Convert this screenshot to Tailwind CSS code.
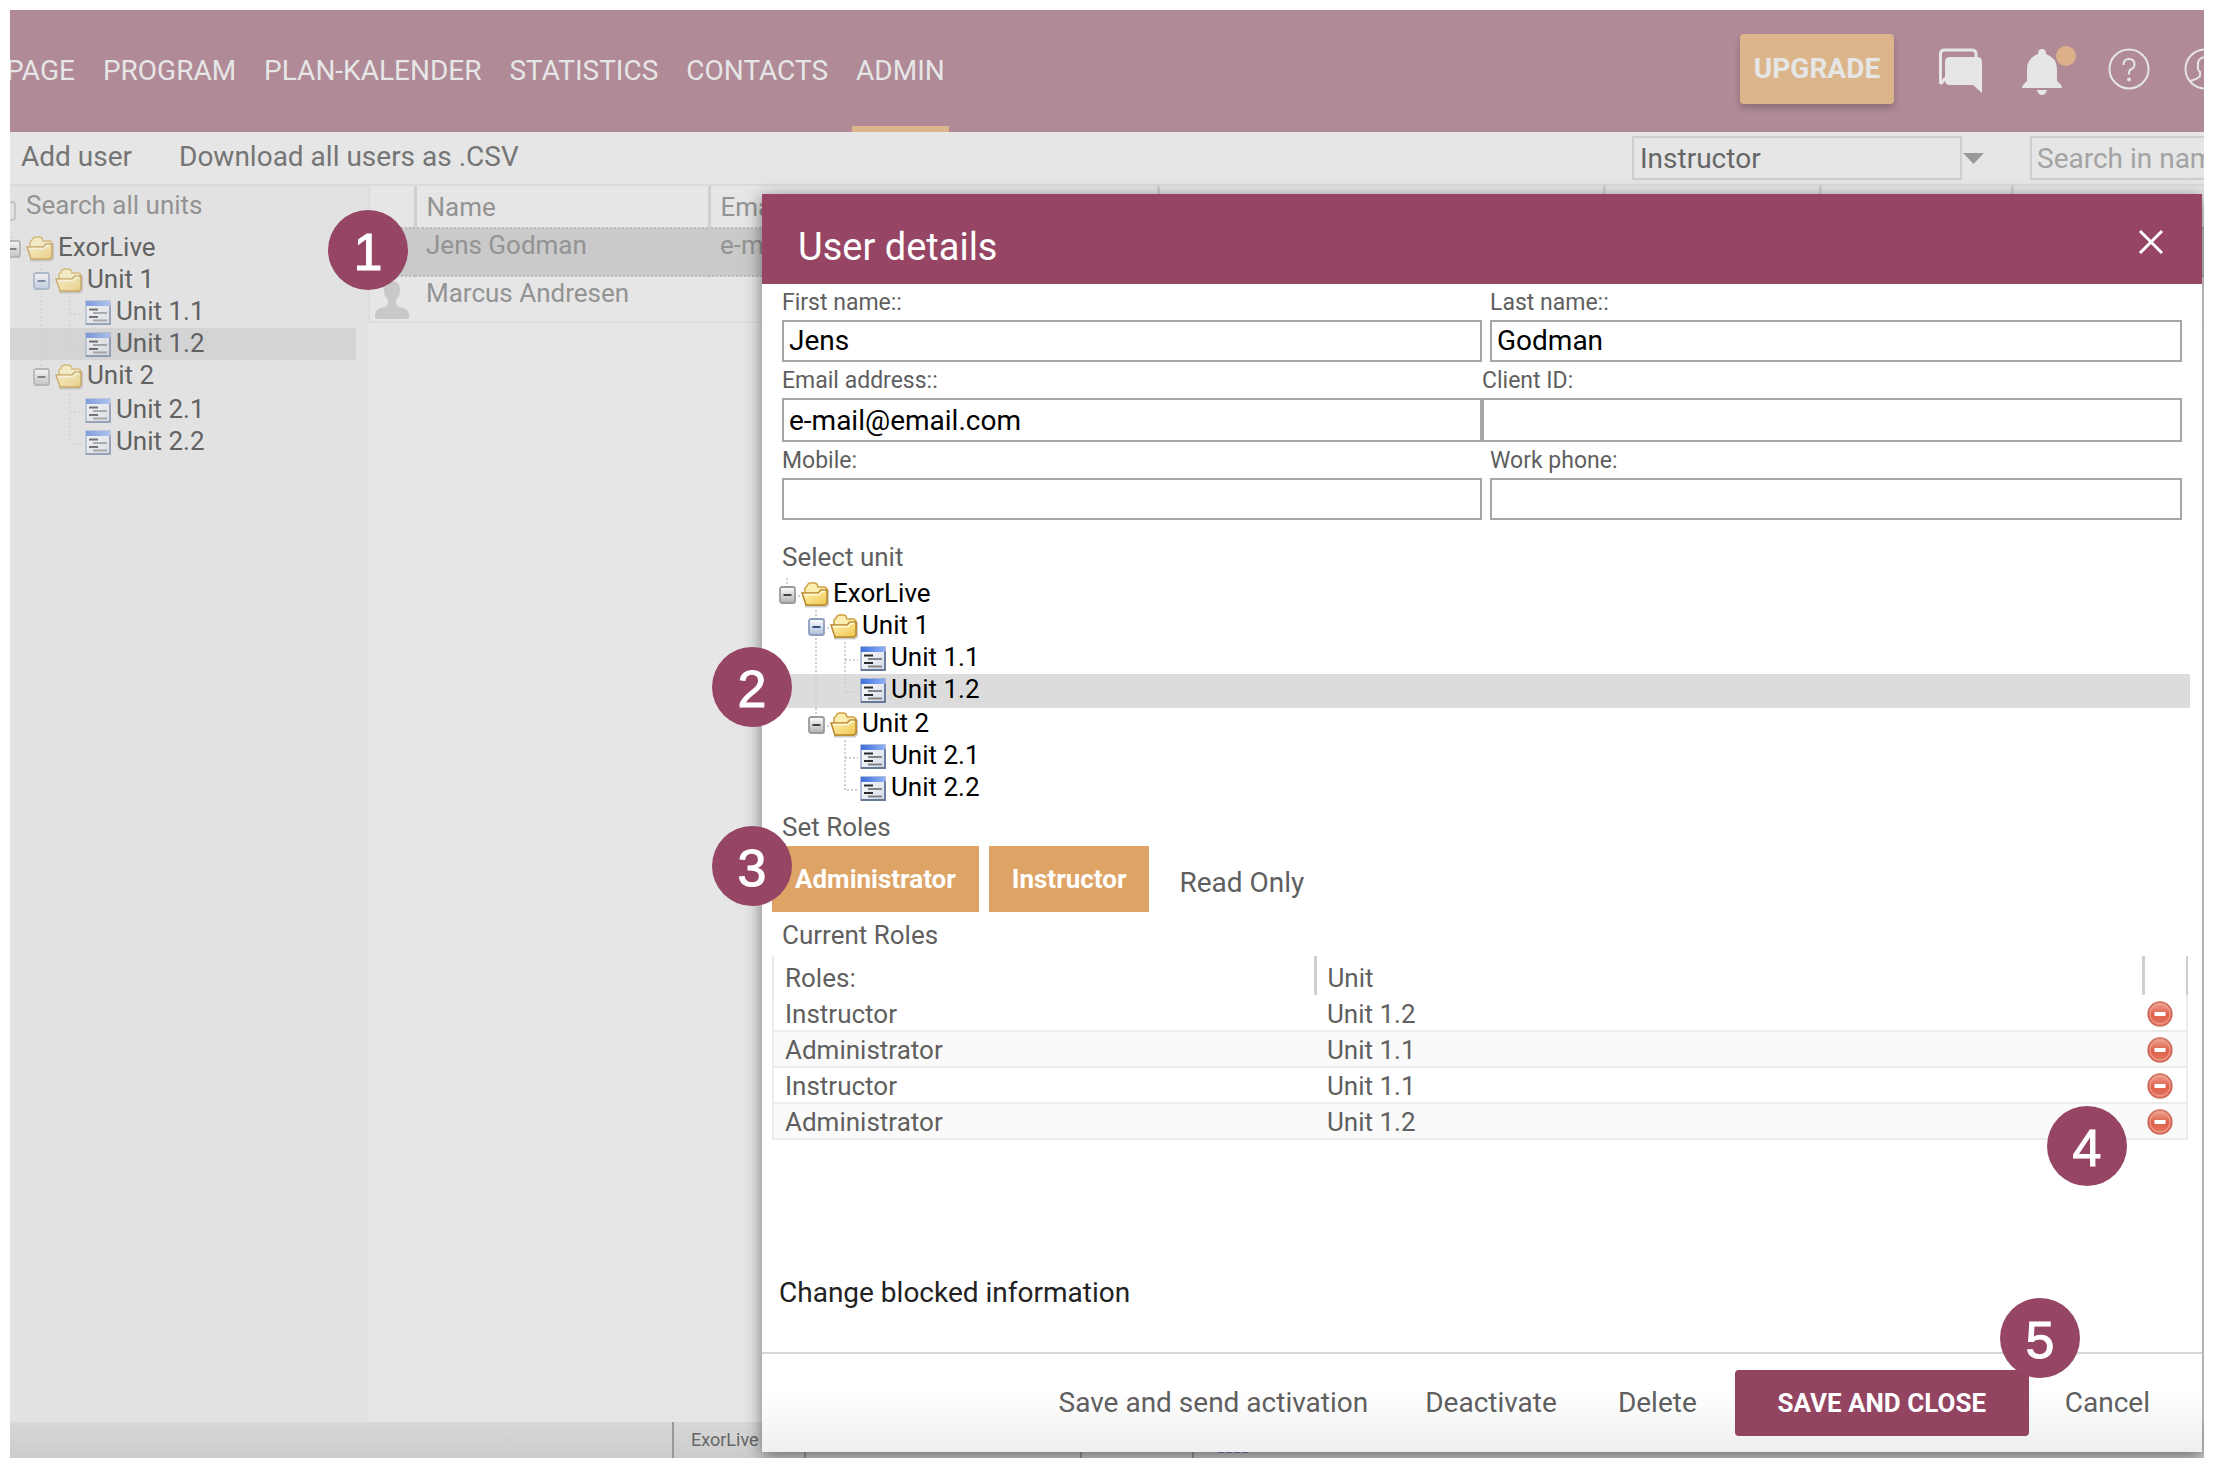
<!DOCTYPE html>
<html lang="en">
<head>
    <meta charset="UTF-8">
    <meta name="viewport" content="width=device-width, initial-scale=1.0">
    <title>ExorLive - User details</title>
    <script src="https://cdn.jsdelivr.net/npm/@tailwindcss/browser@4"></script>
</head>
<body class="h-screen bg-white p-[10px] font-[Roboto,sans-serif] text-[26px] text-[#5f5f5f]">
    <!-- shared icons -->
    <svg class="absolute size-0">
        <defs>
            <linearGradient id="gFolder" x1="0" y1="0" x2="1" y2="1"><stop offset="0" stop-color="#fff6b8"/><stop offset="1" stop-color="#f0c54e"/></linearGradient>
            <linearGradient id="gToggle" x1="0" y1="0" x2="0" y2="1"><stop offset="0" stop-color="#fff"/><stop offset="1" stop-color="#b0b0b0"/></linearGradient>
            <linearGradient id="gToggleBlue" x1="0" y1="0" x2="0" y2="1"><stop offset="0" stop-color="#fff"/><stop offset="1" stop-color="#a9bcdc"/></linearGradient>
            <linearGradient id="gPage" x1="0" y1="0" x2="1" y2="1"><stop offset="0" stop-color="#fff"/><stop offset="1" stop-color="#d3dbe8"/></linearGradient>
            <linearGradient id="gBar" x1="0" y1="0" x2="1" y2="0"><stop offset="0" stop-color="#3f6fdc"/><stop offset="1" stop-color="#8fb0f5"/></linearGradient>
            <linearGradient id="gRemove" x1="0" y1="0" x2="0" y2="1"><stop offset="0" stop-color="#eea38d"/><stop offset="0.55" stop-color="#e0604f"/><stop offset="1" stop-color="#e37a60"/></linearGradient>
        </defs>
        <symbol id="folder" viewBox="0 0 28 26">
            <path d="M4 24.500h21l2-2V8" fill="none" stroke="#000" stroke-opacity=".2" stroke-width="2"/>
            <path d="M4 11V6l2-2 1-2 2-1h5l2 1 1 3h7l2 2v14l-2 2H5z" fill="#fbeeb0" stroke="#d0a040" stroke-width="1.500"/>
            <path d="M1 11h16l3-3h6v13l-2 2H5z" fill="url(#gFolder)" stroke="#b8862c" stroke-width="1.500"/>
            <path d="M3 12.500h15l3-3h3" fill="none" stroke="#fffbe0" stroke-width="1.400"/>
        </symbol>
        <symbol id="page" viewBox="0 0 28 26">
            <rect x="2" y="1" width="24" height="23" fill="url(#gPage)" stroke="#8fa3c8" stroke-width="1.400"/>
            <path d="M2 24h24V5" fill="none" stroke="#66789a" stroke-width="1.800"/>
            <path d="M2 1h24v5H2z" fill="url(#gBar)"/>
            <path d="M5 9.500h9M5 17h9" stroke="#2b2b2b" stroke-width="2.200"/>
            <path d="M9 13h14M9 20.500h14" stroke="#858585" stroke-width="2"/>
        </symbol>
        <symbol id="toggle" viewBox="0 0 18 18">
            <rect x="1" y="1" width="15" height="16" rx="2" fill="url(#gToggle)" stroke="#9a9a9a" stroke-width="1.800"/>
            <path d="M4.500 9h8" stroke="#444" stroke-width="2"/>
        </symbol>
        <symbol id="toggleBlue" viewBox="0 0 18 18">
            <rect x="1" y="1" width="15" height="16" rx="2" fill="url(#gToggleBlue)" stroke="#8b9dbd" stroke-width="1.800"/>
            <path d="M4.500 9h8" stroke="#34507c" stroke-width="2"/>
        </symbol>
        <symbol id="remove" viewBox="0 0 26 26">
            <circle cx="13" cy="13" r="12" fill="url(#gRemove)" stroke="#c9705f" stroke-width="1.400"/>
            <circle cx="13" cy="13" r="10" fill="none" stroke="#eea898" stroke-width="1"/>
            <path d="M7.500 13h11" stroke="#fff" stroke-width="4"/>
        </symbol>
    </svg>

    <div class="relative flex h-full flex-col overflow-hidden bg-[#e6e6e6]">
        <header class="flex h-[122px] shrink-0 justify-between bg-[#b08a96] text-[28px] text-[#e6e6e6]">
            <nav class="-ml-2 flex gap-5">
                <a href="#" class="flex items-center border-b-6 border-transparent px-1 pt-[6px]">PAGE</a>
                <a href="#" class="flex items-center border-b-6 border-transparent px-1 pt-[6px]">PROGRAM</a>
                <a href="#" class="flex items-center border-b-6 border-transparent px-1 pt-[6px]">PLAN-KALENDER</a>
                <a href="#" class="flex items-center border-b-6 border-transparent px-1 pt-[6px]">STATISTICS</a>
                <a href="#" class="flex items-center border-b-6 border-transparent px-1 pt-[6px]">CONTACTS</a>
                <a href="#" class="flex items-center border-b-6 border-[#dcb68a] px-1 pt-[6px]">ADMIN</a>
            </nav>
            <div class="-mr-[22px] flex items-center pb-1">
                <button class="h-[70px] w-[154px] rounded-sm bg-[#dcb68a] font-bold shadow-[0_4px_6px_rgba(0,0,0,0.2)]">UPGRADE</button>
                <button class="ml-[45px] pt-1" aria-label="Messages">
                    <svg width="46" height="46" viewBox="0 0 46 46"><path d="M1.500 36V6q0-4 4-4H33q4 0 4 4v4M1.500 36l5-6" fill="none" stroke="#e6e6e6" stroke-width="3"/><path d="M11 9h27q5 0 5 5v31l-9-8H11q-5 0-5-5V14q0-5 5-5z" fill="#e6e6e6"/></svg>
                </button>
                <button class="ml-9 pt-[6px]" aria-label="Notifications">
                    <svg class="overflow-visible" width="54" height="48" viewBox="0 0 54 48"><path d="M1 40q0-3 5-7V21q0-11 11-15 0-5 4-5t4 5q11 4 11 15v12q5 4 5 7z" fill="#e6e6e6"/><path d="M16 42h10q-1 5-5 5t-5-5z" fill="#e6e6e6"/><circle cx="45" cy="8" r="10" fill="#dcb08a"/></svg>
                </button>
                <button class="ml-[33px]" aria-label="Help">
                    <svg width="42" height="42" viewBox="0 0 42 42" fill="none" stroke="#e6e6e6" stroke-width="2"><circle cx="21" cy="21" r="19.500"/><path d="M15.500 17q0-6 5.500-6t5.500 5.500q0 3-3 4.500t-2.500 5.500"/><circle cx="21" cy="31.500" r="1.500" fill="#e6e6e6" stroke-width="1"/></svg>
                </button>
                <button class="ml-[34px]" aria-label="Profile">
                    <svg width="42" height="42" viewBox="0 0 42 42" fill="none" stroke="#e6e6e6" stroke-width="2"><circle cx="21" cy="21" r="19.500"/><path d="M6 33q8-2 10-5v-4q-3-3-2-6-1-8 7-9 8 1 7 9 1 3-2 6v4q2 3 10 5"/></svg>
                </button>
            </div>
        </header>

        <div class="flex h-[54px] shrink-0 items-center border-b-2 border-[#dadada] text-[28px] text-[#757575]">
            <button class="ml-[11px] pb-[2px]">Add user</button>
            <button class="ml-[47px] pb-[2px]">Download all users as .CSV</button>
            <select aria-label="Role" class="ml-auto h-11 w-[330px] appearance-none border-2 border-[#cecece] px-[6px] text-[#666]">
                <option>Instructor</option>
            </select>
            <svg class="ml-[1px]" width="21" height="11" viewBox="0 0 21 11"><path d="M0 0h21L10.500 11z" fill="#999"/></svg>
            <input type="text" aria-label="Search users" placeholder="Search in name or email" class="ml-[46px] h-11 w-[174px] border-2 border-r-0 border-[#cecece] pl-[5px] placeholder:text-[#a3a3a3]">
        </div>

        <div class="flex min-h-0 flex-1">
            <aside class="w-[358px] shrink-0 bg-[#e2e2e2]">
                <div class="flex h-11 items-center text-[#939393]">
                    <span class="mt-[6px] h-5 w-[6px] rounded-r-sm border-2 border-l-0 border-[#c6c6c6]"></span>
                    <span class="ml-[10px] pb-[6px]">Search all units</span>
                </div>
                <div id="unitTree" class="mt-[2px] mr-3 text-[#626262]"></div>
            </aside>

            <table class="h-[136px] flex-1 table-fixed border-l-2 border-[#dddddd] text-left text-[#939393]">
                <colgroup><col class="w-[46px]"><col class="w-[294px]"><col class="w-[449px]"><col class="w-[446px]"><col class="w-[216px]"><col class="w-[192px]"><col></colgroup>
                <thead>
                    <tr class="h-[42px]">
                        <th class="border-r-3 border-[#cfcfcf]"></th>
                        <th class="border-r-3 border-[#cfcfcf] pt-[2px] pl-[10px] font-normal">Name</th>
                        <th class="border-r-3 border-[#cfcfcf] pt-[2px] pl-[10px] font-normal">Email</th>
                        <th class="border-r-3 border-[#cfcfcf]"></th>
                        <th class="border-r-3 border-[#cfcfcf]"></th>
                        <th class="border-r-3 border-[#cfcfcf]"></th>
                        <th></th>
                    </tr>
                </thead>
                <tbody>
                    <tr class="h-12 border-y-2 border-dotted border-[#b8b8b8] bg-[#cacaca] align-top">
                        <td></td><td class="pl-[11px] leading-8">Jens Godman</td><td class="pl-[11px] leading-8">e-mail@email.com</td><td></td><td></td><td></td><td></td>
                    </tr>
                    <tr class="h-[46px] border-b-2 border-[#dddddd] align-top">
                        <td class="pt-1 pl-1"><svg width="36" height="38" viewBox="0 0 36 38"><path d="M18 0q8 0 8 9 0 6-4 10v4q1 3 7 4 6 2 6 7v2q0 2-2 2H3q-2 0-2-2v-2q0-5 6-7 6-1 7-4v-4q-4-4-4-10 0-9 8-9z" fill="#c8c8c8"/></svg></td>
                        <td class="pl-[11px] leading-8">Marcus Andresen</td><td></td><td></td><td></td><td></td><td></td>
                    </tr>
                </tbody>
            </table>
        </div>

        <div class="flex h-9 shrink-0 bg-linear-to-b from-[#d8d8d8] to-[#cccccc] text-[18px] text-[#666]">
            <span class="w-[664px] border-r-2 border-[#999]"></span>
            <span class="w-[132px] border-r-2 border-[#999] pl-[17px] leading-9">ExorLive</span>
            <span class="w-[276px] border-r-2 border-[#999]"></span>
            <span class="w-[112px] border-r-2 border-[#999]"></span>
            <span class="ml-6 h-[31px] w-[30px] border-b-2 border-dashed border-[#7a80a8]"></span>
        </div>

        <!-- user dialog -->
        <section role="dialog" aria-label="User details" class="absolute top-[184px] right-[2px] bottom-[6px] left-[752px] flex flex-col bg-white shadow-[0_4px_16px_rgba(0,0,0,0.5)]">
            <div class="flex h-[90px] shrink-0 items-center justify-between bg-[#964664] pt-4 pr-[38px] pl-9 text-white">
                <h1 class="text-[38px]">User details</h1>
                <button aria-label="Close" class="pb-[10px]"><svg width="26" height="26" viewBox="0 0 26 26"><path d="M2 2l22 22M24 2L2 24" stroke="#fff" stroke-width="3"/></svg></button>
            </div>

            <div class="flex-1">
                <form class="px-5 text-[23px]">
                    <div class="grid grid-cols-[700fr_692fr] gap-x-2">
                        <div><label for="first" class="flex h-9 items-center pt-[2px]">First name::</label><input id="first" value="Jens" class="h-[42px] w-full border-2 border-[#a6a6a6] px-[5px] text-[28px] text-black"></div>
                        <div><label for="last" class="flex h-9 items-center pt-[2px]">Last name::</label><input id="last" value="Godman" class="h-[42px] w-full border-2 border-[#a6a6a6] px-[5px] text-[28px] text-black"></div>
                    </div>
                    <div class="grid grid-cols-2">
                        <div><label for="email" class="flex h-9 items-center pt-[2px]">Email address::</label><input id="email" value="e-mail@email.com" class="h-11 w-full border-2 border-[#a6a6a6] px-[5px] text-[28px] text-black"></div>
                        <div><label for="client" class="flex h-9 items-center pt-[2px]">Client ID:</label><input id="client" class="h-11 w-full border-2 border-[#a6a6a6] px-[5px] text-[28px] text-black"></div>
                    </div>
                    <div class="grid grid-cols-[700fr_692fr] gap-x-2">
                        <div><label for="mobile" class="flex h-9 items-center pt-[2px]">Mobile:</label><input id="mobile" class="h-[42px] w-full border-2 border-[#a6a6a6] px-[5px] text-[28px] text-black"></div>
                        <div><label for="work" class="flex h-9 items-center pt-[2px]">Work phone:</label><input id="work" class="h-[42px] w-full border-2 border-[#a6a6a6] px-[5px] text-[28px] text-black"></div>
                    </div>
                </form>

                <h2 class="mt-[19px] pl-5 leading-9">Select unit</h2>
                <div id="dialogTree" class="mt-[3px] mr-3 ml-[10px] text-black"></div>

                <h2 class="mt-[5px] pl-5 leading-9">Set Roles</h2>
                <div class="mt-[1px] flex h-[66px] items-center gap-[10px] pl-[10px]">
                    <button class="h-full bg-[#dda466] px-[23px] font-bold text-white">Administrator</button>
                    <button class="h-full bg-[#dda466] px-[23px] font-bold text-white">Instructor</button>
                    <button class="pt-2 pl-5 text-[28px]">Read Only</button>
                </div>

                <h2 class="mt-[5px] pl-5 leading-9">Current Roles</h2>
                <div class="mt-[3px] mr-[14px] ml-[10px]">
                    <table class="w-full table-fixed text-left">
                        <colgroup><col class="w-[542px]"><col><col class="w-[44px]"></colgroup>
                        <thead>
                            <tr class="h-[39px]">
                                <th class="border-r-3 border-l-2 border-r-[#cfcfcf] border-l-[#e8e8e8] pt-1 pl-[11px] leading-8 font-normal">Roles:</th>
                                <th class="border-r-3 border-[#cfcfcf] pt-1 pl-[11px] leading-8 font-normal">Unit</th>
                                <th class="border-r-2 border-[#cfcfcf]"></th>
                            </tr>
                        </thead>
                        <tbody id="roles"></tbody>
                    </table>
                </div>

                <button class="mt-[132px] ml-[17px] text-[28px] text-[#222]">Change blocked information</button>
            </div>

            <footer class="flex h-[100px] shrink-0 items-center justify-end border-t-2 border-[#d8d8d8] bg-linear-to-b from-white from-40% to-[#eeeeee] pr-[52px] text-[28px]">
                <button>Save and send activation</button>
                <button class="ml-[57px]">Deactivate</button>
                <button class="ml-[61px]">Delete</button>
                <button class="ml-[38px] h-[66px] w-[294px] rounded-sm bg-[#924461] text-[26px] font-bold text-white">SAVE AND CLOSE</button>
                <button class="ml-9">Cancel</button>
            </footer>
        </section>

        <!-- step markers -->
        <span class="absolute top-[200px] left-[318px] flex size-20 items-center justify-center rounded-full bg-[#964664] pt-1 font-['Liberation_Sans',sans-serif] text-[52px] text-white [-webkit-text-stroke:1px_white]">1</span>
        <span class="absolute top-[637px] left-[702px] flex size-20 items-center justify-center rounded-full bg-[#964664] pt-1 font-['Liberation_Sans',sans-serif] text-[52px] text-white [-webkit-text-stroke:1px_white]">2</span>
        <span class="absolute top-[816px] left-[702px] flex size-20 items-center justify-center rounded-full bg-[#964664] pt-1 font-['Liberation_Sans',sans-serif] text-[52px] text-white [-webkit-text-stroke:1px_white]">3</span>
        <span class="absolute top-[1096px] right-[77px] flex size-20 items-center justify-center rounded-full bg-[#964664] pt-1 font-['Liberation_Sans',sans-serif] text-[52px] text-white [-webkit-text-stroke:1px_white]">4</span>
        <span class="absolute top-[1288px] right-[124px] flex size-20 items-center justify-center rounded-full bg-[#964664] pt-1 font-['Liberation_Sans',sans-serif] text-[52px] text-white [-webkit-text-stroke:1px_white]">5</span>
    </div>

    <script>
        // cells: b = blank, v = vertical line, t = tee, l = last child, + = toggle, * = blue toggle
        const units = [
            { name: 'ExorLive', cells: '+' },
            { name: 'Unit 1', cells: 'b*' },
            { name: 'Unit 1.1', cells: 'bvt' },
            { name: 'Unit 1.2', cells: 'bvl', selected: true },
            { name: 'Unit 2', cells: 'b+' },
            { name: 'Unit 2.1', cells: 'bbt' },
            { name: 'Unit 2.2', cells: 'bbl' }
        ];
        const roles = [['Instructor', 'Unit 1.2'], ['Administrator', 'Unit 1.1'], ['Instructor', 'Unit 1.1'], ['Administrator', 'Unit 1.2']];

        const lines = {
            b: '',
            v: 'M15 0V34',
            t: 'M15 0V34M15 18H28',
            l: 'M15 0V18H28',
            '+': 'M15 0V10M22 18H29',
            '*': 'M15 0V34M22 18H29'
        };

        function cell(c) {
            let toggle = '';
            if (c === '+') toggle = '<use href="#toggle" x="7" y="8" width="18" height="18"/>';
            if (c === '*') toggle = '<use href="#toggleBlue" x="7" y="8" width="18" height="18"/>';
            return `<svg class="shrink-0" width="29" height="34" viewBox="0 0 29 34"><path d="${lines[c]}" fill="none" stroke="#d0d0d0" stroke-width="2" stroke-dasharray="2 2"/>${toggle}</svg>`;
        }

        function drawTree(id, iconClass, selectedClass, tallRow) {
            document.getElementById(id).innerHTML = units.map((u, i) => {
                const height = i === tallRow ? 'h-[34px]' : 'h-8';
                const icon = u.cells.length === 3 ? 'page' : 'folder';
                return `<div class="flex ${height} overflow-hidden ${u.selected ? selectedClass : ''}">
                    <span class="-ml-[13px] flex shrink-0 ${iconClass}">${[...u.cells].map(cell).join('')}<svg class="mt-1" width="28" height="26"><use href="#${icon}"/></svg></span>
                    <span class="ml-1 leading-[30px]">${u.name}</span>
                </div>`;
            }).join('');
        }

        drawTree('unitTree', 'opacity-60', 'bg-[#d4d4d4]', 4);
        drawTree('dialogTree', 'pl-[13px]', 'bg-[#dcdcdc]', 3);

        document.getElementById('roles').innerHTML = roles.map(([role, unit]) => `
            <tr class="h-9 border-x-2 border-b-2 border-[#ececec] even:bg-[#fafafa]">
                <td class="pt-[2px] pl-[11px] leading-8">${role}</td>
                <td class="pt-[2px] pl-3 leading-8">${unit}</td>
                <td><button aria-label="Remove role" class="block pt-[2px] pl-1"><svg width="26" height="26"><use href="#remove"/></svg></button></td>
            </tr>`).join('');
    </script>
</body>
</html>
